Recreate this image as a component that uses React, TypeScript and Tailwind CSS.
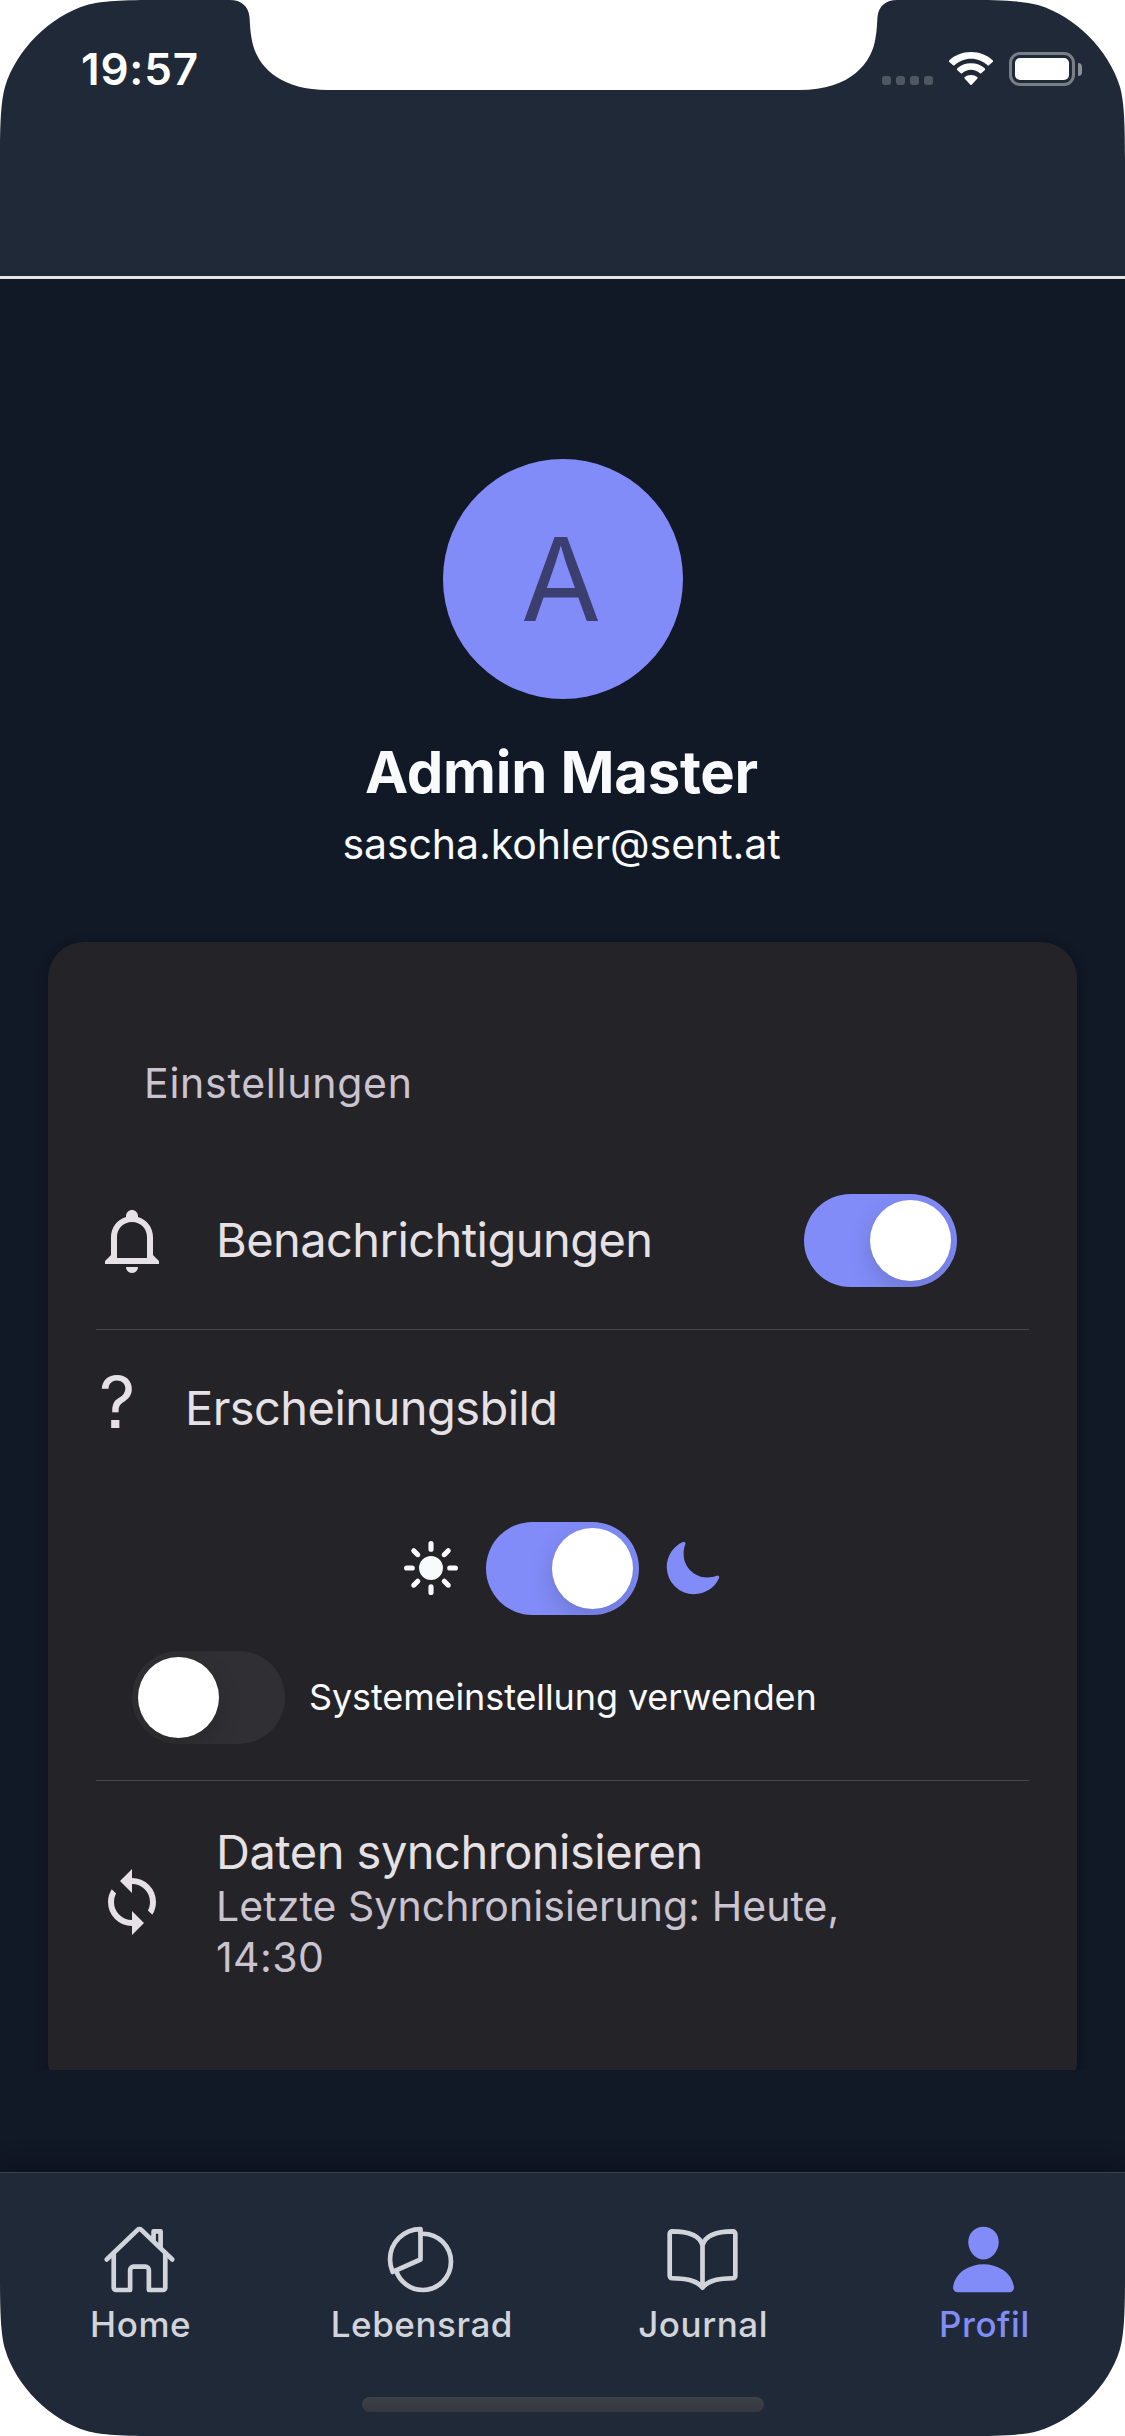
import type { ComponentType, ReactNode } from "react";
import {
  IoBookOutline,
  IoHomeOutline,
  IoMoon,
  IoPerson,
  IoPieChartOutline,
  IoSunny,
} from "react-icons/io5";

function BellOutline() {
  return (
    <svg viewBox="0 0 24 24" className="mb-px size-[72px] shrink-0" fill="currentColor">
      <path d="M10 21H14C14 22.1 13.1 23 12 23S10 22.1 10 21M21 19V20H3V19L5 17V11C5 7.9 7 5.2 10 4.3V4C10 2.9 10.9 2 12 2S14 2.9 14 4V4.3C17 5.2 19 7.9 19 11V17L21 19M17 11C17 8.2 14.8 6 12 6S7 8.2 7 11V18H17V11Z" />
    </svg>
  );
}

function SyncIcon() {
  return (
    <svg viewBox="0 0 24 24" className="mb-px size-[72px] shrink-0" fill="currentColor">
      <path d="M12,18A6,6 0 0,1 6,12C6,11 6.25,10.03 6.7,9.2L5.24,7.74C4.46,8.97 4,10.43 4,12A8,8 0 0,0 12,20V23L16,19L12,15M12,4V1L8,5L12,9V6A6,6 0 0,1 18,12C18,13 17.75,13.97 17.3,14.8L18.76,16.26C19.54,15.03 20,13.57 20,12A8,8 0 0,0 12,4Z" />
    </svg>
  );
}

function WifiIcon() {
  return (
    <svg viewBox="0 0 46 34" className="ml-[15px] h-[34px] w-[46px]" fill="#fff">
      <path d="M23 6.800C29.300 6.800 35 9.300 39.500 13.300C39.900 13.700 40.500 13.700 40.900 13.300L44.900 9.800C45.300 9.400 45.300 8.800 44.900 8.400C39.200 3.100 31.500 0 23 0S6.800 3.100 1.100 8.400C.7 8.800 .7 9.400 1.100 9.800L5.100 13.300C5.500 13.700 6.100 13.700 6.500 13.300C11 9.300 16.700 6.800 23 6.800Z" />
      <path d="M23 17.800c3.400 0 6.500 1.300 8.900 3.500.4.4.9.4 1.300 0l3.700-3.400c.4-.4.4-1 0-1.400C33.300 13.100 28.400 11.300 23 11.300s-10.300 1.800-13.900 5.200c-.4.4-.4 1 0 1.400l3.700 3.400c.4.4.9.4 1.300 0 2.400-2.200 5.500-3.500 8.900-3.500Z" />
      <path d="M29.400 26.500c.4-.4.400-1 0-1.300C27.600 23.700 25.400 23 23 23s-4.600.7-6.400 2.200c-.4.300-.4.900 0 1.300l5.700 6.300c.4.400 1 .4 1.400 0Z" />
    </svg>
  );
}

function BatteryIcon() {
  return (
    <div className="ml-[15px] flex items-center gap-[3px]">
      <div className="h-[34px] w-[66px] rounded-[11px] border-[3px] border-[#797f87] p-[3px]">
        <div className="h-full rounded-[5px] bg-white" />
      </div>
      <div className="h-[13px] w-1 rounded-r-full bg-[#8b9097]" />
    </div>
  );
}

function Toggle({ on = false }: { on?: boolean }) {
  return (
    <div
      className={`flex h-[93px] w-[153px] shrink-0 overflow-hidden rounded-full p-[6px] ${
        on ? "justify-end bg-[#818cf8]" : "justify-start bg-[#302f34]"
      }`}
    >
      <div className="size-[81px] rounded-full bg-white shadow-[0_9px_24px_rgba(0,0,0,0.15)]" />
    </div>
  );
}

function Tab({
  icon: Icon,
  active = false,
  children,
}: {
  icon: ComponentType<{ size?: number; className?: string }>;
  active?: boolean;
  children: ReactNode;
}) {
  return (
    <div
      className={`flex flex-1 flex-col items-center text-[35px] leading-[42px] font-medium tracking-[0.55px] ${
        active ? "text-[#818cf8]" : "text-[#d1d5db]"
      }`}
    >
      <Icon size={75} className="mr-[2px]" />
      <span className="mt-[6px]">{children}</span>
    </div>
  );
}

const CORNER = "M0 0V160C0 122 1 101 5 87C16 50 50 16 87 5C101 1 122 0 160 0Z";

function DeviceMask() {
  return (
    <svg
      viewBox="0 0 1125 2436"
      className="pointer-events-none absolute inset-0 h-[2436px] w-[1125px]"
      fill="#fff"
    >
      <path d={CORNER} />
      <path d={CORNER} transform="translate(1125 0) scale(-1 1)" />
      <path d={CORNER} transform="translate(0 2436) scale(1 -1)" />
      <path d={CORNER} transform="translate(1125 2436) scale(-1 -1)" />
      <path d="M230 0C241 0 248.500 6 249.500 17C250 23 250 30 251.500 38C255 62 275 90 328 90H799C852 90 872 62 875.500 38C877 30 877 23 877.500 17C878.500 6 886 0 897 0Z" />
    </svg>
  );
}

export default function App() {
  return (
    <div className="relative flex h-[2436px] w-[1125px] flex-col overflow-hidden bg-[#111826] font-['Inter',sans-serif]">
      <header className="h-[279px] shrink-0 border-b-[3px] border-[#e5e5e5] bg-[#202937]">
        <div className="flex h-[138px] items-center justify-between pr-[43px] pl-[81px]">
          <span className="text-[44px] leading-none font-semibold tracking-[0.8px] text-white">
            19:57
          </span>
          <div className="flex items-center">
            <div className="mt-[23px] flex gap-[5px]">
              <i className="size-[9px] rounded-[3px] bg-[#4f5862]" />
              <i className="size-[9px] rounded-[3px] bg-[#4f5862]" />
              <i className="size-[9px] rounded-[3px] bg-[#4f5862]" />
              <i className="size-[9px] rounded-[3px] bg-[#4f5862]" />
            </div>
            <WifiIcon />
            <BatteryIcon />
          </div>
        </div>
      </header>

      <main className="flex h-[1791px] shrink-0 flex-col items-center overflow-hidden px-12 pt-[180px]">
        <div className="flex size-[240px] shrink-0 items-center justify-center rounded-full bg-[#818cf8] pr-[3px] pb-px text-[116px] leading-none text-[#3b3f70]">
          A
        </div>
        <h1 className="mt-[43px] pr-[2px] text-[58px] leading-[60px] font-bold tracking-[-0.26px] text-[#f9fafb]">
          Admin Master
        </h1>
        <p className="mt-[17px] pr-[2px] text-[41px] leading-[51px] tracking-[-0.06px] text-[#f9fafb]">
          sascha.kohler@sent.at
        </p>

        <section className="mt-[72px] h-[1155px] w-full shrink-0 rounded-[36px] bg-[#242328] px-12 pt-[111px] text-[#e6e1e5] shadow-[0_3px_12px_rgba(0,0,0,0.3)]">
          <h2 className="pl-12 text-[41px] leading-[60px] tracking-[0.75px] text-[#cac4d0]">
            Einstellungen
          </h2>

          <div className="mt-[39px] flex h-[178px] items-center border-b border-[#49454f] pr-[72px]">
            <BellOutline />
            <span className="ml-12 flex-1 pb-px text-[47px] leading-[60px] tracking-[-0.56px]">
              Benachrichtigungen
            </span>
            <Toggle on />
          </div>

          <div className="border-b border-[#49454f] pb-9">
            <div className="flex h-[156px] items-center">
              <span className="w-[89px] pb-3 pl-[3px] text-[71px] leading-[86px] [font-feature-settings:'ss07']">
                ?
              </span>
              <span className="text-[47px] leading-[60px] tracking-[-0.56px]">
                Erscheinungsbild
              </span>
            </div>
            <div className="mt-9 flex items-center pl-[305px]">
              <IoSunny size={60} className="mr-[25px] mb-px text-[#f9fafb]" />
              <Toggle on />
              <IoMoon size={60} className="mb-px ml-6 text-[#818cf8]" />
            </div>
            <div className="mt-9 flex items-center gap-6 pl-9">
              <Toggle />
              <span className="pb-[2px] text-[36px] leading-[48px] tracking-[-0.11px] text-[#f9fafb]">
                Systemeinstellung verwenden
              </span>
            </div>
          </div>

          <div className="flex items-center pt-[41px]">
            <SyncIcon />
            <div className="ml-12 w-[690px]">
              <p className="text-[47px] leading-[59px] tracking-[-0.5px]">
                Daten synchronisieren
              </p>
              <p className="text-[41px] leading-[51px] tracking-[0.06px] text-[#cac4d0]">
                Letzte Synchronisierung: Heute,{" "}
                <span className="tracking-[0.4px]">14:30</span>
              </p>
            </div>
          </div>
        </section>
      </main>

      <nav className="mt-auto flex h-[264px] shrink-0 flex-col items-center border-t border-[#374151] bg-[#202937] pt-[49px] shadow-[0_-6px_24px_rgba(0,0,0,0.3)]">
        <div className="flex w-full">
          <Tab icon={IoHomeOutline}>Home</Tab>
          <Tab icon={IoPieChartOutline}>Lebensrad</Tab>
          <Tab icon={IoBookOutline}>Journal</Tab>
          <Tab icon={IoPerson} active>
            Profil
          </Tab>
        </div>
        <div className="mt-[52px] h-[15px] w-[402px] rounded-full bg-linear-to-b from-[#3d4044] to-[#353841]" />
      </nav>

      <DeviceMask />
    </div>
  );
}
